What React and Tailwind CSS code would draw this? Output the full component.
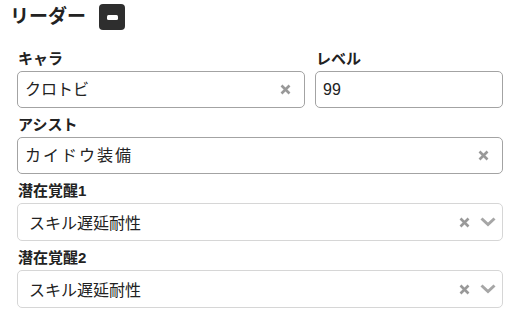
import React from "react";

const font = { fontFamily: '"Liberation Sans", "Noto Sans CJK JP", sans-serif' };
const jp = { fontFamily: '"Noto Sans CJK JP", "Liberation Sans", sans-serif' };

function XIcon({ className = "" }) {
  return (
    <svg width="11" height="11" viewBox="0 0 11 11" className={className}>
      <path d="M1.5 1.5 L9.5 9.5 M9.5 1.5 L1.5 9.5" stroke="#999999" strokeWidth="2.6" strokeLinecap="butt" fill="none" />
    </svg>
  );
}

function Chevron() {
  return (
    <svg width="16" height="10" viewBox="0 0 16 10">
      <path d="M1.5 1.5 L8 7.5 L14.5 1.5" stroke="#a6a6a6" strokeWidth="3" fill="none" strokeLinejoin="miter" />
    </svg>
  );
}

function Label({ children, className = "" }) {
  return (
    <div className={"h-[21px] leading-[21px] text-[15px] font-bold text-[#222] mb-[2px] pl-[1px] " + className}>
      {children}
    </div>
  );
}

function TextInput({ value, clear, textClass = "" }) {
  return (
    <div className="h-[37px] border border-[#a3a3a3] rounded-[5px] bg-white flex items-center pl-[7px] pr-[13px]">
      <span className={"flex-1 text-[16px] text-[#222] " + textClass}>{value}</span>
      {clear && <XIcon />}
    </div>
  );
}

function SelectBox({ value }) {
  return (
    <div className="h-[38px] border border-[#d6d6d6] rounded-[5px] bg-white flex items-center pl-[11px] pr-[5px]">
      <span className="flex-1 text-[16px] text-[#222]" style={jp}>{value}</span>
      <XIcon />
      <div className="ml-[10px] mr-[1px] flex items-center">
        <Chevron />
      </div>
    </div>
  );
}

export default function App() {
  return (
    <div className="w-[512px] h-[313px] bg-white pt-[4px] pl-[10px] pr-[9px]" style={font}>
      <div className="flex items-center h-[26px]">
        <span className="text-[19px] font-bold text-[#222] leading-[26px]">リーダー</span>
        <div className="ml-[13px] w-[26px] h-[26px] rounded-[4px] bg-[#2e2e2e] flex items-center justify-center">
          <div className="w-[11px] h-[5px] rounded-[1.5px] bg-white" />
        </div>
      </div>
      <div className="pl-[7px] mt-[18px]">
        <div className="flex gap-[10px]">
          <div className="w-[288px]">
            <Label>キャラ</Label>
            <TextInput value="クロトビ" clear />
          </div>
          <div className="flex-1">
            <Label>レベル</Label>
            <TextInput value="99" />
          </div>
        </div>
        <Label className="mt-[6px]">アシスト</Label>
        <TextInput value="カイドウ装備" clear textClass="tracking-[2px]" />
        <Label className="mt-[6px]">潜在覚醒1</Label>
        <SelectBox value="スキル遅延耐性" />
        <Label className="mt-[6px]">潜在覚醒2</Label>
        <SelectBox value="スキル遅延耐性" />
      </div>
    </div>
  );
}
